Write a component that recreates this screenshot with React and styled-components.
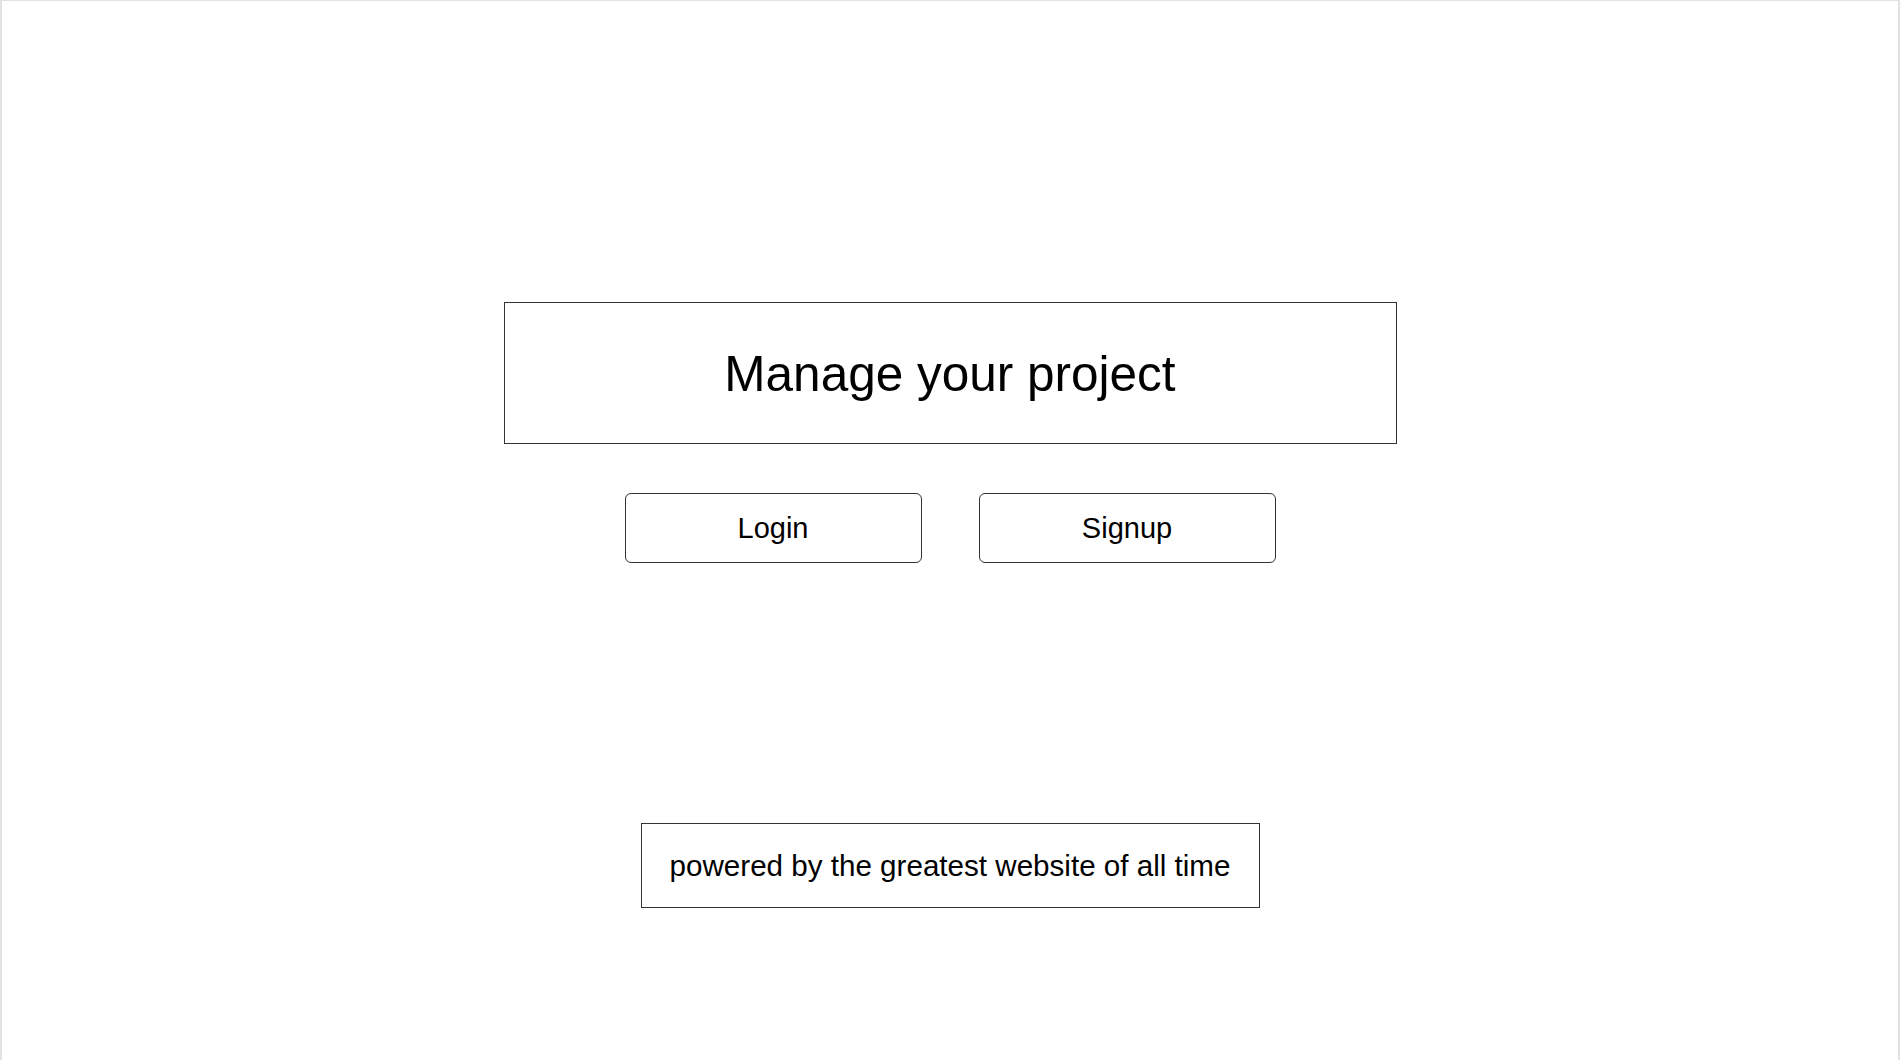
import styled, { createGlobalStyle } from 'styled-components';

const GlobalStyle = createGlobalStyle`
  html, body {
    margin: 0;
    padding: 0;
    background: #fff;
  }
  body {
    font-family: 'Liberation Sans', Arial, Helvetica, sans-serif;
    color: #000;
  }
`;

const Frame = styled.div`
  box-sizing: border-box;
  height: 1060px;
  border-top: 1px solid #e2e2e2;
  border-left: 2px solid #e2e2e2;
  border-right: 2px solid #e2e2e2;
  display: flex;
  flex-direction: column;
  align-items: center;
  padding-top: 301px;
`;

const TitleBox = styled.header`
  box-sizing: border-box;
  width: 893px;
  height: 142px;
  border: 1px solid #333;
  display: flex;
  align-items: center;
  justify-content: center;

  h1 {
    margin: 0;
    font-size: 49.5px;
    font-weight: 400;
  }
`;

const ButtonRow = styled.div`
  display: flex;
  gap: 57px;
  margin-top: 49px;
`;

const Button = styled.button`
  box-sizing: border-box;
  width: 297px;
  height: 70px;
  border: 1px solid #333;
  border-radius: 6px;
  background: #fff;
  font-family: 'Liberation Sans', Arial, sans-serif;
  font-size: 29px;
  color: #000;
  cursor: pointer;
`;

const Footer = styled.footer`
  box-sizing: border-box;
  margin-top: 260px;
  width: 619px;
  height: 85px;
  border: 1px solid #333;
  display: flex;
  align-items: center;
  justify-content: center;
  font-size: 29.6px;
`;

const App = () => {
  return (
    <>
      <GlobalStyle />
      <Frame>
        <TitleBox>
          <h1>Manage your project</h1>
        </TitleBox>
        <ButtonRow>
          <Button>Login</Button>
          <Button>Signup</Button>
        </ButtonRow>
        <Footer>powered by the greatest website of all time</Footer>
      </Frame>
    </>
  );
};

export default App;
